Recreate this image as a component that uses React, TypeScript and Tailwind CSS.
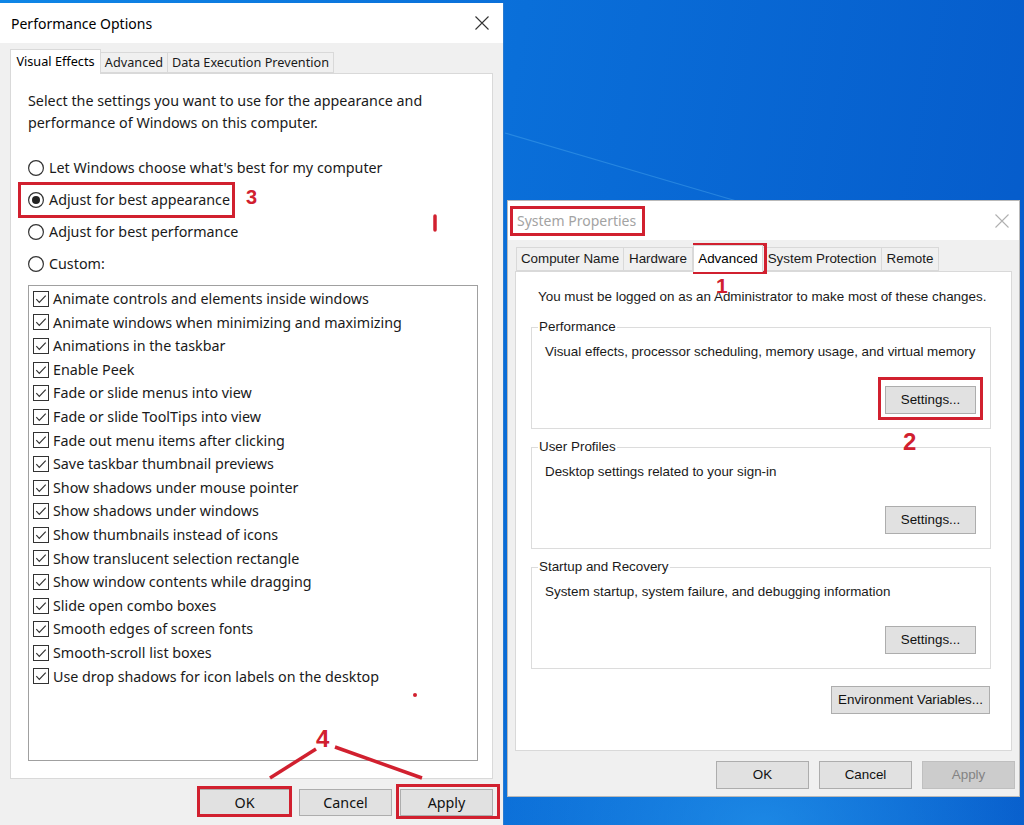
import React from 'react';

const effects = [
  'Animate controls and elements inside windows',
  'Animate windows when minimizing and maximizing',
  'Animations in the taskbar',
  'Enable Peek',
  'Fade or slide menus into view',
  'Fade or slide ToolTips into view',
  'Fade out menu items after clicking',
  'Save taskbar thumbnail previews',
  'Show shadows under mouse pointer',
  'Show shadows under windows',
  'Show thumbnails instead of icons',
  'Show translucent selection rectangle',
  'Show window contents while dragging',
  'Slide open combo boxes',
  'Smooth edges of screen fonts',
  'Smooth-scroll list boxes',
  'Use drop shadows for icon labels on the desktop',
];

const radios = [
  { label: "Let Windows choose what's best for my computer", checked: false },
  { label: 'Adjust for best appearance', checked: true },
  { label: 'Adjust for best performance', checked: false },
  { label: 'Custom:', checked: false },
];

function CloseIcon({ stroke }: { stroke: string }) {
  return (
    <svg width="14" height="14" viewBox="0 0 14 14">
      <path d="M0.5 0.5 L13.5 13.5 M13.5 0.5 L0.5 13.5" stroke={stroke} strokeWidth="1.1" fill="none" />
    </svg>
  );
}

function Radio({ checked }: { checked: boolean }) {
  return (
    <svg width="16" height="16" viewBox="0 0 16 16" className="shrink-0">
      <circle cx="8" cy="8" r="7.4" fill="#fff" stroke="#333" strokeWidth="1.2" />
      {checked && <circle cx="8" cy="8" r="4" fill="#222" />}
    </svg>
  );
}

function Check() {
  return (
    <svg width="16" height="16" viewBox="0 0 16 16" className="shrink-0">
      <rect x="0.5" y="0.5" width="15" height="15" fill="#fff" stroke="#333" />
      <path d="M3.3 8.2 L6.3 11.3 L12.7 4.6" stroke="#333" strokeWidth="1.2" fill="none" />
    </svg>
  );
}

function WinButton({ label, w, h, disabled }: { label: string; w: string; h: string; disabled?: boolean }) {
  return (
    <div
      className={`${w} ${h} shrink-0 flex items-center justify-center whitespace-nowrap border ${
        disabled ? 'bg-[#cccccc] border-[#bfbfbf] text-[#838383]' : 'bg-[#e1e1e1] border-[#adadad] text-[#111]'
      }`}
    >
      {label}
    </div>
  );
}

function Group({ title, text, btn }: { title: string; text: string; btn: React.ReactNode }) {
  return (
    <fieldset className="w-[460px] min-w-0 border border-[#dcdcdc] pl-[13px] pr-[14px] pb-[14px]">
      <legend className="-ml-[7px] px-[1px] h-[18px] leading-[18px]">{title}</legend>
      <div className="mt-[7px] h-[18px] leading-[18px] whitespace-nowrap">{text}</div>
      <div className="mt-[25px] flex justify-end">{btn}</div>
    </fieldset>
  );
}

function PerformanceOptions() {
  return (
    <div className="absolute left-0 top-[3px] w-[504px] h-[822px] flex flex-col bg-[#f0f0f0] border-r border-[#2a7bd0] font-[family-name:'Noto_Sans',sans-serif] text-[14.3px] text-[#1a1a1a]">
      <div className="h-[40px] shrink-0 bg-white flex items-center justify-between pl-[11px] pr-[14px]">
        <span className="text-[14px] text-black">Performance Options</span>
        <CloseIcon stroke="#333" />
      </div>
      <div className="flex flex-col px-[10px] pt-[5px]">
        <div className="flex items-end h-[25px] whitespace-nowrap text-[12.7px]">
          <div className="w-[91px] h-[25px] -mb-px relative z-10 bg-white border border-b-0 border-[#d9d9d9] flex items-center justify-center text-black">
            Visual Effects
          </div>
          <div className="w-[67px] h-[21px] border-y border-r border-[#d9d9d9] flex items-center justify-center">
            Advanced
          </div>
          <div className="w-[166px] h-[21px] border-y border-r border-[#d9d9d9] flex items-center justify-center">
            Data Execution Prevention
          </div>
        </div>
        <div className="h-[706px] bg-white border border-[#d9d9d9] pl-[17px] pt-[16px]">
          <p className="leading-[22px]">
            Select the settings you want to use for the appearance and
            <br />
            performance of Windows on this computer.
          </p>
          <div className="mt-[18px] flex flex-col">
            {radios.map((r) => (
              <div key={r.label} className="h-[32px] flex items-center gap-[5px]">
                <Radio checked={r.checked} />
                <span>{r.label}</span>
              </div>
            ))}
          </div>
          <div className="mt-[5px] w-[450px] h-[476px] border border-[#a0a0a0] pl-[4px] pt-[1px]">
            {effects.map((e) => (
              <div key={e} className="h-[23.6px] flex items-center gap-[4px]">
                <Check />
                <span>{e}</span>
              </div>
            ))}
          </div>
        </div>
      </div>
      <div className="mt-[10px] flex justify-end gap-[8px] pr-[10px]">
        <WinButton label="OK" w="w-[93px]" h="h-[27px]" />
        <WinButton label="Cancel" w="w-[93px]" h="h-[27px]" />
        <WinButton label="Apply" w="w-[93px]" h="h-[27px]" />
      </div>
    </div>
  );
}

function SystemProperties() {
  const tabs = [
    { label: 'Computer Name', w: 'w-[108px]' },
    { label: 'Hardware', w: 'w-[69px]' },
  ];
  return (
    <div className="absolute left-[507px] top-[200px] w-[513px] h-[597px] flex flex-col bg-[#f0f0f0] border border-[#b9b9b9] font-[family-name:'Liberation_Sans',Arial,sans-serif] text-[13.4px] text-[#1a1a1a]">
      <div className="h-[39px] shrink-0 bg-white flex items-center justify-between pl-[9px] pr-[10px]">
        <span className="text-[14px] text-[#a3a3a3] font-[family-name:'Noto_Sans',sans-serif]">System Properties</span>
        <CloseIcon stroke="#b0b0b0" />
      </div>
      <div className="flex flex-col pl-[7px] pt-[4px]">
        <div className="flex items-end h-[27px] ml-[1px] whitespace-nowrap">
          {tabs.map((t) => (
            <div key={t.label} className={`${t.w} h-[24px] border-y border-r first:border-l border-[#d9d9d9] flex items-center justify-center`}>
              {t.label}
            </div>
          ))}
          <div className="w-[70px] h-[27px] -mb-px relative z-10 bg-white border border-b-0 border-[#d9d9d9] flex items-center justify-center text-black">
            Advanced
          </div>
          <div className="w-[119px] h-[24px] border-y border-r border-[#d9d9d9] flex items-center justify-center">
            System Protection
          </div>
          <div className="w-[57px] h-[24px] border-y border-r border-[#d9d9d9] flex items-center justify-center">
            Remote
          </div>
        </div>
        <div className="w-[497px] h-[480px] bg-white border border-[#d9d9d9] pl-[15px] pt-[16px] flex flex-col">
          <div className="ml-[7px] h-[18px] leading-[18px] whitespace-nowrap">
            You must be logged on as an Administrator to make most of these changes.
          </div>
          <div className="mt-[12px]">
            <Group
              title="Performance"
              text="Visual effects, processor scheduling, memory usage, and virtual memory"
              btn={<WinButton label="Settings..." w="w-[91px]" h="h-[28px]" />}
            />
          </div>
          <div className="mt-[9px]">
            <Group
              title="User Profiles"
              text="Desktop settings related to your sign-in"
              btn={<WinButton label="Settings..." w="w-[91px]" h="h-[28px]" />}
            />
          </div>
          <div className="mt-[9px]">
            <Group
              title="Startup and Recovery"
              text="System startup, system failure, and debugging information"
              btn={<WinButton label="Settings..." w="w-[91px]" h="h-[28px]" />}
            />
          </div>
          <div className="mt-[17px] w-[460px] flex justify-end pr-[1px]">
            <WinButton label="Environment Variables..." w="w-[159px]" h="h-[28px]" />
          </div>
        </div>
      </div>
      <div className="mt-[10px] flex justify-end gap-[10px] pr-[4px]">
        <WinButton label="OK" w="w-[93px]" h="h-[28px]" />
        <WinButton label="Cancel" w="w-[93px]" h="h-[28px]" />
        <WinButton label="Apply" w="w-[93px]" h="h-[28px]" disabled />
      </div>
    </div>
  );
}

function Annotations() {
  const num = "absolute font-[family-name:'Liberation_Sans',Arial,sans-serif] font-bold text-[#d1202f] leading-none";
  return (
    <>
      {/* red highlight boxes */}
      <div className="absolute left-[18px] top-[182px] w-[217px] h-[36px] border-[3px] border-[#d1202f]" />
      <div className="absolute left-[197px] top-[786px] w-[95px] h-[31px] border-[3px] border-[#d1202f]" />
      <div className="absolute left-[396px] top-[784px] w-[104px] h-[35px] border-[3px] border-[#d1202f]" />
      <div className="absolute left-[510px] top-[206px] w-[135px] h-[30px] border-[3px] border-[#d1202f]" />
      <div className="absolute left-[693px] top-[243px] w-[74px] h-[31px] border-[3px] border-[#d1202f]" />
      <div className="absolute left-[878px] top-[377px] w-[105px] h-[43px] border-[3px] border-[#d1202f]" />

      <span className={`${num} left-[246px] top-[187px] text-[20px]`}>3</span>
      <span className={`${num} left-[716px] top-[275px] text-[21px]`}>1</span>
      <span className={`${num} left-[903px] top-[430px] text-[24px]`}>2</span>
      <span className={`${num} left-[316px] top-[727px] text-[24px]`}>4</span>

      <svg className="absolute left-0 top-0 pointer-events-none" width="1024" height="825">
        <line x1="270" y1="778" x2="316" y2="749" stroke="#d1202f" strokeWidth="3.5" />
        <line x1="335" y1="747" x2="422" y2="778" stroke="#d1202f" strokeWidth="3.5" />
        <line x1="435" y1="216" x2="435" y2="230" stroke="#d1202f" strokeWidth="3.5" strokeLinecap="round" />
        <circle cx="415" cy="695" r="2" fill="#d1202f" />
      </svg>
    </>
  );
}

export default function App() {
  return (
    <div className="relative w-[1024px] h-[825px] overflow-hidden bg-[linear-gradient(100deg,#0f86e6_0%,#0a6fd9_45%,#0559c9_100%)]">
      <svg className="absolute left-0 top-0" width="1024" height="825">
        <defs>
          <radialGradient id="glow" cx="0.5" cy="1" r="0.6">
            <stop offset="0" stopColor="#2aa0f2" stopOpacity="0.6" />
            <stop offset="1" stopColor="#2aa0f2" stopOpacity="0" />
          </radialGradient>
        </defs>
        <rect x="500" y="500" width="524" height="325" fill="url(#glow)" />
        <line x1="505" y1="133" x2="740" y2="202" stroke="#5cb8f5" strokeWidth="1.2" opacity="0.35" />
      </svg>
      <PerformanceOptions />
      <SystemProperties />
      <Annotations />
    </div>
  );
}
